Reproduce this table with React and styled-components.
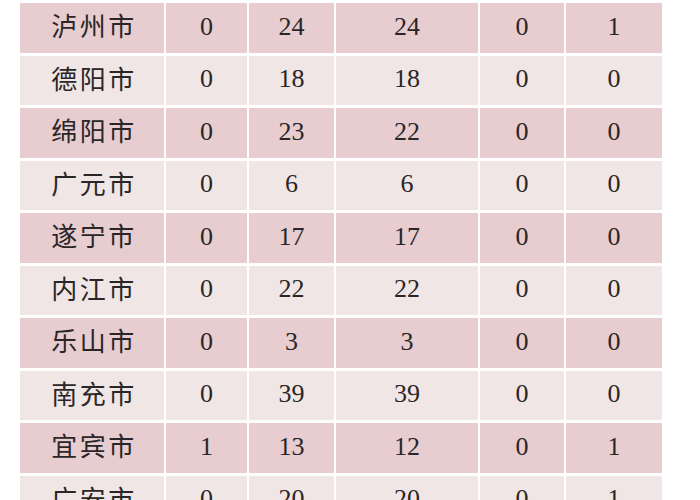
import React from "react";
import styled, { createGlobalStyle } from "styled-components";

const GlobalStyle = createGlobalStyle`
  html, body {
    margin: 0;
    padding: 0;
    background: #ffffff;
  }
`;

const Page = styled.div`
  width: 700px;
  height: 500px;
  overflow: hidden;
  padding-left: 18px;
  box-sizing: border-box;
`;

const Table = styled.table`
  border-collapse: separate;
  border-spacing: 2px 3px;
  margin-top: 0;
  table-layout: fixed;
  width: 646px;
`;

const Row = styled.tr`
  height: 49.5px;
  background: ${(p) => (p.$dark ? "#e7ccd0" : "#f1e6e6")};
`;

const NameCell = styled.td`
  padding: 0 0 6px 4px;
  text-align: center;
  vertical-align: middle;
  font-family: "Noto Sans CJK SC", "Noto Sans", sans-serif;
  font-size: 26px;
  letter-spacing: 2.5px;
  color: #2a2627;
`;

const NumCell = styled.td`
  padding: 0 0 2px 0;
  text-align: center;
  vertical-align: middle;
  font-family: "Liberation Serif", "DejaVu Serif", serif;
  font-size: 26px;
  color: #2a2627;
`;

const widths = [144, 81, 85, 142, 84, 96];

const rows = [
  ["泸州市", 0, 24, 24, 0, 1],
  ["德阳市", 0, 18, 18, 0, 0],
  ["绵阳市", 0, 23, 22, 0, 0],
  ["广元市", 0, 6, 6, 0, 0],
  ["遂宁市", 0, 17, 17, 0, 0],
  ["内江市", 0, 22, 22, 0, 0],
  ["乐山市", 0, 3, 3, 0, 0],
  ["南充市", 0, 39, 39, 0, 0],
  ["宜宾市", 1, 13, 12, 0, 1],
  ["广安市", 0, 20, 20, 0, 1],
];

export default function App() {
  return (
    <Page>
      <GlobalStyle />
      <Table>
        <colgroup>
          {widths.map((w, i) => (
            <col key={i} style={{ width: w }} />
          ))}
        </colgroup>
        <tbody>
          {rows.map(([name, ...nums], i) => (
            <Row key={name} $dark={i % 2 === 0}>
              <NameCell>{name}</NameCell>
              {nums.map((n, j) => (
                <NumCell key={j}>{n}</NumCell>
              ))}
            </Row>
          ))}
        </tbody>
      </Table>
    </Page>
  );
}
